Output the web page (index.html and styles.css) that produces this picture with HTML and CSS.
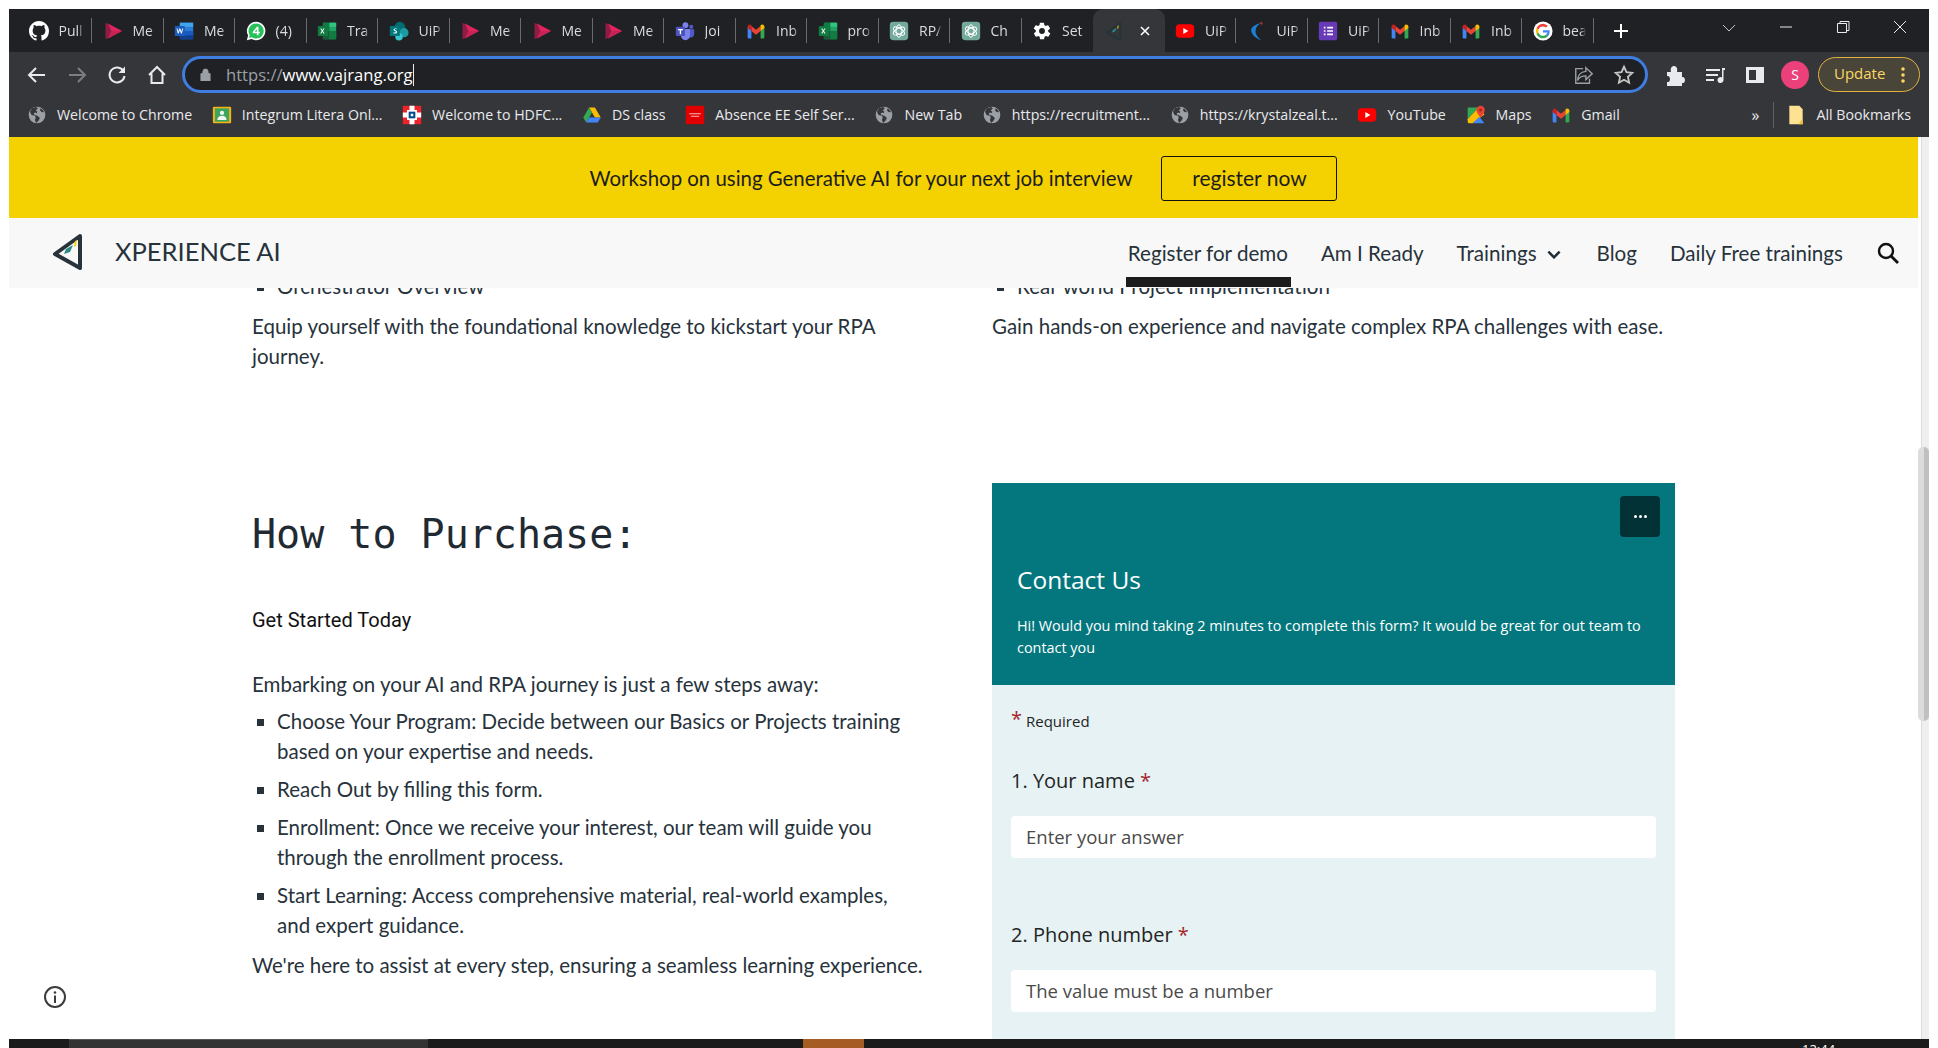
FILE: index.html
```html
<!DOCTYPE html>
<html lang="en">
<head>
    <meta charset="UTF-8">
    <title>XPERIENCE AI</title>
    <link rel="stylesheet" href="styles.css">
</head>
<body>
    <svg class="defs" width="0" height="0">
        <symbol id="i-github" viewBox="0 0 16 16"><path fill="#fff" d="M8 0C3.58 0 0 3.58 0 8c0 3.54 2.29 6.53 5.47 7.59.4.07.55-.17.55-.38 0-.19-.01-.82-.01-1.49-2.01.37-2.53-.49-2.69-.94-.09-.23-.48-.94-.82-1.13-.28-.15-.68-.52-.01-.53.63-.01 1.08.58 1.23.82.72 1.21 1.87.87 2.33.66.07-.52.28-.87.51-1.07-1.78-.2-3.64-.89-3.64-3.95 0-.87.31-1.59.82-2.15-.08-.2-.36-1.02.08-2.12 0 0 .67-.21 2.2.82.64-.18 1.32-.27 2-.27.68 0 1.36.09 2 .27 1.53-1.04 2.2-.82 2.2-.82.44 1.1.16 1.92.08 2.12.51.56.82 1.27.82 2.15 0 3.07-1.87 3.75-3.65 3.95.29.25.54.73.54 1.48 0 1.07-.01 1.93-.01 2.2 0 .21.15.46.55.38A8.013 8.013 0 0016 8c0-4.42-3.58-8-8-8z"/></symbol>
        <symbol id="i-stream" viewBox="0 0 24 24"><path fill="#8e1c44" d="M3 2l9 5v10l-9 5z"/><path fill="#e0245e" d="M6 3l17 9L6 21l4-9z"/><path fill="#b51f50" d="M10 12h13L6 21z" opacity=".55"/></symbol>
        <symbol id="i-word" viewBox="0 0 24 24"><rect x="7" y="2" width="16" height="20" rx="1.5" fill="#2b7cd3"/><rect x="7" y="2" width="16" height="5" fill="#41a5ee"/><rect x="7" y="12" width="16" height="5" fill="#185abd"/><rect x="7" y="17" width="16" height="5" fill="#103f91"/><rect x="1" y="6" width="12" height="12" rx="1" fill="#1a5dbf"/><path d="M3 9l1.6 6h1l1.4-4 1.4 4h1L11 9H9.8l-.9 3.8L7.6 9h-1.200L5.100 12.800 4.200 9z" fill="#fff"/></symbol>
        <symbol id="i-whatsapp" viewBox="0 0 24 24"><path fill="#fff" d="M12 1a11 11 0 00-9.500 16.500L1 23l5.700-1.500A11 11 0 1012 1z"/><path fill="#25c15b" d="M12 3a9 9 0 00-7.600 13.700L3.600 20.300l3.500-.9A9 9 0 1012 3z"/><path fill="#fff" d="M13 7h2v6h1.500v1.800H15V17h-2v-2.200H8v-1.600zm0 6V10l-2.600 3z"/></symbol>
        <symbol id="i-excel" viewBox="0 0 24 24"><rect x="7" y="2" width="16" height="20" rx="1.500" fill="#21a366"/><rect x="7" y="2" width="8" height="10" fill="#107c41"/><rect x="15" y="12" width="8" height="10" fill="#107c41"/><rect x="7" y="12" width="8" height="10" fill="#185c37"/><rect x="15" y="2" width="8" height="5" fill="#33c481"/><rect x="1" y="6" width="12" height="12" rx="1" fill="#107c41"/><path d="M3.800 9h1.500l1.100 2 1.200-2h1.400l-1.900 3 2 3H7.600l-1.200-2.100L5.200 15H3.800l2-3z" fill="#fff"/></symbol>
        <symbol id="i-share" viewBox="0 0 24 24"><circle cx="13" cy="7.500" r="6.500" fill="#036c70"/><circle cx="18" cy="14" r="5.500" fill="#1a9ba1"/><circle cx="12" cy="19" r="4.500" fill="#37c6d0"/><rect x="1" y="6" width="12" height="12" rx="1" fill="#03787c"/><path d="M9.500 9.300C8.700 8.800 6 8.500 5.500 10.200c-.4 1.800 3 1.700 2.800 3-.2 1-2 .8-3 .2v1.300c1.200.5 4.300.6 4.400-1.600.1-2-3-1.900-2.800-3 .2-.8 1.600-.6 2.600-.1z" fill="#fff"/></symbol>
        <symbol id="i-teams" viewBox="0 0 24 24"><circle cx="12.500" cy="5" r="3.500" fill="#7b83eb"/><circle cx="19.500" cy="7" r="2.500" fill="#5059c9"/><path d="M16 10h7v6a4 4 0 01-7 2.500z" fill="#5059c9"/><path d="M7 9.500h11v8a5 5 0 01-11 0z" fill="#7b83eb"/><rect x="1" y="7" width="11" height="11" rx="1" fill="#4b53bc"/><path d="M3.500 9.500h6v1.500H7.300v5H5.700v-5H3.500z" fill="#fff"/></symbol>
        <symbol id="i-gmail" viewBox="0 0 24 24"><path fill="#4285f4" d="M2 7h4.500v14H3.500A1.500 1.500 0 012 19.500z"/><path fill="#34a853" d="M17.500 7H22v12.500a1.500 1.500 0 01-1.500 1.500h-3z"/><path fill="#ea4335" d="M6.500 6L12 10.500 17.500 6v6L12 16.500 6.500 12z"/><path fill="#c5221f" d="M2 7c0-2.500 2.700-3.500 4.500-2V12L2 8.500z"/><path fill="#fbbc04" d="M22 7c0-2.500-2.700-3.500-4.500-2V12L22 8.500z"/></symbol>
        <symbol id="i-gpt" viewBox="0 0 24 24"><rect x="1" y="1" width="22" height="22" rx="4" fill="#74aa9c"/><g fill="none" stroke="#fff" stroke-width="1.200"><ellipse cx="12" cy="12" rx="3.500" ry="7.500"/><ellipse cx="12" cy="12" rx="3.500" ry="7.500" transform="rotate(60 12 12)"/><ellipse cx="12" cy="12" rx="3.500" ry="7.500" transform="rotate(120 12 12)"/></g></symbol>
        <symbol id="i-gear" viewBox="0 0 24 24"><path fill="#fff" d="M19.400 13a7.500 7.500 0 000-2l2.100-1.600a.5.5 0 00.1-.6l-2-3.500a.5.5 0 00-.6-.2l-2.500 1a7.300 7.300 0 00-1.700-1l-.4-2.600a.5.5 0 00-.5-.5h-4a.5.5 0 00-.5.400l-.4 2.700a7.300 7.300 0 00-1.700 1l-2.500-1a.5.5 0 00-.6.2l-2 3.500a.5.5 0 00.1.6L4.600 11a7.500 7.500 0 000 2l-2.100 1.600a.5.5 0 00-.1.6l2 3.500c.1.200.4.300.6.200l2.500-1c.5.400 1.100.7 1.700 1l.4 2.600c0 .3.200.5.500.5h4c.3 0 .5-.2.500-.4l.4-2.700c.6-.3 1.200-.6 1.700-1l2.500 1c.2.100.5 0 .6-.2l2-3.500a.5.5 0 00-.1-.6zM12 15.500a3.500 3.500 0 110-7 3.500 3.500 0 010 7z"/></symbol>
        <symbol id="i-logo" viewBox="0 0 34 38"><path d="M29 4L4 22l25 14V4z" fill="none" stroke="#27323b" stroke-width="4" stroke-linejoin="round"/><path d="M15 17l7-4-3 7-6 2z" fill="#2a8a83"/><path d="M24 9l2-1-1 6-2 1z" fill="#f4d100"/></symbol>
        <symbol id="i-youtube" viewBox="0 0 24 24"><rect x="1" y="4" width="22" height="16" rx="4.500" fill="#f00"/><path d="M10 8.500l6 3.500-6 3.500z" fill="#fff"/></symbol>
        <symbol id="i-uip" viewBox="0 0 24 24"><path d="M17 2C9 7 7 15 17 23 13 22 5 17 5 11c0-4 5-7 12-9z" fill="#1b7fd4"/><path d="M16 1l3 1-2 3z" fill="#e02b2b"/></symbol>
        <symbol id="i-forms" viewBox="0 0 24 24"><rect x="1" y="1" width="22" height="22" rx="2" fill="#673ab7"/><path d="M7 7h2v2H7zm4 0h7v2h-7zm-4 4h2v2H7zm4 0h7v2h-7zm-4 4h2v2H7zm4 0h7v2h-7z" fill="#fff"/></symbol>
        <symbol id="i-google" viewBox="0 0 24 24"><circle cx="12" cy="12" r="11.500" fill="#fff"/><path d="M12 11v2.800h5.200a5.400 5.400 0 01-1.500 2.500l2.300 1.900A8 8 0 0020 12l-.1-1z" fill="#4285f4"/><path d="M6.600 13.800l-2.400 1.900A8.500 8.500 0 0018 18.200l-2.300-1.900a5.500 5.500 0 01-9.100-2.500z" fill="#34a853"/><path d="M6.600 10.300L4.200 8.400a8.500 8.500 0 000 7.300l2.400-1.900a5.500 5.500 0 010-3.500z" fill="#fbbc04"/><path d="M12 6.500c1.400 0 2.700.5 3.700 1.400l2.100-2.100A8.500 8.500 0 004.200 8.400l2.400 1.900A5.500 5.500 0 0112 6.500z" fill="#ea4335"/></symbol>
        <symbol id="i-globe" viewBox="0 0 24 24"><circle cx="12" cy="12" r="10" fill="#9aa0a6"/><path d="M11 2.500l-5 1.500-2.500 4 2 4 4 1 1 2-1 3 1.500 3.500 3-3 1.500-3-3-2.500-3.500-1-1-2 2-1 1.500 1 1-2-2-1.500 2.500-2.500z" fill="#35363a"/><path d="M16.500 3.800l-1 2.500 2 2 3 .5a10 10 0 00-4-5z" fill="#35363a"/></symbol>
        <symbol id="i-integrum" viewBox="0 0 24 24"><rect x="1" y="2" width="22" height="20" rx="1.500" fill="#f2b31b"/><rect x="3.500" y="4" width="17" height="16" fill="#3ba55d"/><circle cx="12" cy="9.500" r="2.500" fill="#f4f4f4"/><path d="M6.500 18c0-3.500 2.500-5 5.500-5s5.500 1.500 5.500 5z" fill="#f4f4f4"/></symbol>
        <symbol id="i-hdfc" viewBox="0 0 24 24"><rect x="1" y="1" width="22" height="22" fill="#ed232a"/><path d="M1 9h5V6h3V1h6v5h3v3h5v6h-5v3h-3v5H9v-5H6v-3H1z" fill="#fff"/><rect x="8" y="8" width="8" height="8" fill="#004c8f"/><rect x="10.500" y="10.500" width="3" height="3" fill="#fff"/></symbol>
        <symbol id="i-drive" viewBox="0 0 24 24"><path d="M8.500 3h7l7 12h-7z" fill="#fbbc04"/><path d="M8.500 3l-7 12 3.500 6 7-12z" fill="#34a853"/><path d="M5 21h14l3.500-6h-14z" fill="#4285f4"/></symbol>
        <symbol id="i-oracle" viewBox="0 0 24 24"><rect x="1" y="1" width="22" height="22" fill="#e00000"/><path d="M5 10h14v1H5zm2 3h10v1H7z" fill="#f7b5b5"/></symbol>
        <symbol id="i-maps" viewBox="0 0 24 24"><path d="M2 3h13L2 17z" fill="#34a853"/><path d="M2 17L15 3l7 8v.500L8 22H4a2 2 0 01-2-2z" fill="#fbbc04"/><path d="M8 22l8-8 6 8z" fill="#4285f4"/><path d="M17.500 1a5 5 0 00-5 5c0 3.500 5 9 5 9s5-5.500 5-9a5 5 0 00-5-5z" fill="#ea4335"/><circle cx="17.500" cy="6" r="1.800" fill="#a52714"/></symbol>
        <symbol id="i-folder" viewBox="0 0 24 24"><path d="M4 1h12l4 4v18H4z" fill="#fde293"/><path d="M20 16v7h-5z" fill="#f2bd42"/></symbol>
    </svg>

    <div class="window">
        <div class="tabstrip">
            <div class="tab"><svg class="favicon"><use href="#i-github"/></svg><span class="tab-title">Pull</span></div>
            <div class="tab"><svg class="favicon"><use href="#i-stream"/></svg><span class="tab-title">Me</span></div>
            <div class="tab"><svg class="favicon"><use href="#i-word"/></svg><span class="tab-title">Me</span></div>
            <div class="tab"><svg class="favicon"><use href="#i-whatsapp"/></svg><span class="tab-title">(4)</span></div>
            <div class="tab"><svg class="favicon"><use href="#i-excel"/></svg><span class="tab-title">Tra</span></div>
            <div class="tab"><svg class="favicon"><use href="#i-share"/></svg><span class="tab-title">UiP</span></div>
            <div class="tab"><svg class="favicon"><use href="#i-stream"/></svg><span class="tab-title">Me</span></div>
            <div class="tab"><svg class="favicon"><use href="#i-stream"/></svg><span class="tab-title">Me</span></div>
            <div class="tab"><svg class="favicon"><use href="#i-stream"/></svg><span class="tab-title">Me</span></div>
            <div class="tab"><svg class="favicon"><use href="#i-teams"/></svg><span class="tab-title">Joi</span></div>
            <div class="tab"><svg class="favicon"><use href="#i-gmail"/></svg><span class="tab-title">Inb</span></div>
            <div class="tab"><svg class="favicon"><use href="#i-excel"/></svg><span class="tab-title">pro</span></div>
            <div class="tab"><svg class="favicon"><use href="#i-gpt"/></svg><span class="tab-title">RP/</span></div>
            <div class="tab"><svg class="favicon"><use href="#i-gpt"/></svg><span class="tab-title">Ch</span></div>
            <div class="tab no-sep"><svg class="favicon"><use href="#i-gear"/></svg><span class="tab-title">Set</span></div>
            <div class="tab tab-active">
                <svg class="favicon"><use href="#i-logo"/></svg>
                <svg class="tab-close" viewBox="0 0 12 12"><path d="M2 2l8 8M10 2l-8 8" stroke="#fff" stroke-width="1.600"/></svg>
            </div>
            <div class="tab"><svg class="favicon"><use href="#i-youtube"/></svg><span class="tab-title">UiP</span></div>
            <div class="tab"><svg class="favicon"><use href="#i-uip"/></svg><span class="tab-title">UiP</span></div>
            <div class="tab"><svg class="favicon"><use href="#i-forms"/></svg><span class="tab-title">UiP</span></div>
            <div class="tab"><svg class="favicon"><use href="#i-gmail"/></svg><span class="tab-title">Inb</span></div>
            <div class="tab"><svg class="favicon"><use href="#i-gmail"/></svg><span class="tab-title">Inb</span></div>
            <div class="tab"><svg class="favicon"><use href="#i-google"/></svg><span class="tab-title">bea</span></div>
            <svg class="new-tab" viewBox="0 0 16 16"><path d="M8 1v14M1 8h14" stroke="#fff" stroke-width="2"/></svg>
            <div class="window-controls">
                <svg class="win-btn" viewBox="0 0 16 16"><path d="M2 6l6 6 6-6" fill="none" stroke="#c4c7c5"/></svg>
                <svg class="win-btn" viewBox="0 0 16 16"><path d="M2 8h12" stroke="#e8eaed"/></svg>
                <svg class="win-btn" viewBox="0 0 16 16"><path d="M2.500 4.500h9v9h-9zM5 4.500V2.500h9v9h-2.500" fill="none" stroke="#e8eaed"/></svg>
                <svg class="win-btn" viewBox="0 0 16 16"><path d="M2 2l12 12M14 2L2 14" stroke="#e8eaed"/></svg>
            </div>
        </div>

        <div class="toolbar">
            <svg class="tool-icon" viewBox="0 0 24 24"><path d="M20 12H5M11 5l-7 7 7 7" fill="none" stroke="#e8eaed" stroke-width="2"/></svg>
            <svg class="tool-icon" viewBox="0 0 24 24"><path d="M4 12h15M13 5l7 7-7 7" fill="none" stroke="#7c7e82" stroke-width="2"/></svg>
            <svg class="tool-icon" viewBox="0 0 24 24"><path d="M18.500 8A7.500 7.500 0 1019.500 13" fill="none" stroke="#e8eaed" stroke-width="2"/><path d="M20 3.500V10h-6.500z" fill="#e8eaed"/></svg>
            <svg class="tool-icon" viewBox="0 0 24 24"><path d="M4 12l8-8 8 8M6.500 10.500V20h11v-9.500" fill="none" stroke="#e8eaed" stroke-width="2"/></svg>
            <div class="omnibox">
                <svg class="lock" viewBox="0 0 12 14"><path d="M1 6h10v8H1zM3.200 6V3.800a2.800 2.800 0 015.600 0V6" fill="#9aa0a6" stroke="#9aa0a6" stroke-width="1" fill-rule="evenodd"/></svg>
                <span class="url"><span class="url-scheme">https://</span>www.vajrang.org</span><span class="caret"></span>
                <svg class="omni-icon omni-share" viewBox="0 0 24 24"><path d="M14 4l7 6.500-7 6.500v-4c-4 0-7 1-9 5 0-5 3-9.500 9-10zM11 5H3v16h15v-5" fill="none" stroke="#9aa0a6" stroke-width="1.500"/></svg>
                <svg class="omni-icon" viewBox="0 0 24 24"><path d="M12 3l2.700 6 6.300.7-4.700 4.300 1.300 6.500L12 17.200l-5.600 3.300 1.300-6.500L3 9.700 9.300 9z" fill="none" stroke="#c4c7c5" stroke-width="2"/></svg>
            </div>
            <svg class="tool-icon" viewBox="0 0 24 24"><path d="M4 9h4c-1-4 1-6 3-6s4 2 3 6h5v5c4-1 4 7 0 6v3H4v-4c4 1 4-7 0-6z" fill="#e8eaed"/></svg>
            <svg class="tool-icon" viewBox="0 0 24 24"><path d="M3 6h14v2H3zm0 5h12v2H3zm0 5h8v2H3zM19 5h3v2h-1.500v10a3 3 0 11-1.500-2.500z" fill="#e8eaed"/></svg>
            <svg class="tool-icon" viewBox="0 0 24 24"><path d="M3 4h18v16H3zM6 7v10h7V7z" fill="#e8eaed" fill-rule="evenodd"/></svg>
            <span class="avatar">S</span>
            <div class="update-btn">
                <span class="update-label">Update</span>
                <svg class="update-dots" viewBox="0 0 4 18"><circle cx="2" cy="3" r="1.800"/><circle cx="2" cy="9" r="1.800"/><circle cx="2" cy="15" r="1.800"/></svg>
            </div>
        </div>

        <div class="bookmarks">
            <a class="bm bm-chrome"><svg class="bm-icon"><use href="#i-globe"/></svg>Welcome to Chrome</a>
            <a class="bm"><svg class="bm-icon"><use href="#i-integrum"/></svg>Integrum Litera Onl...</a>
            <a class="bm"><svg class="bm-icon"><use href="#i-hdfc"/></svg>Welcome to HDFC...</a>
            <a class="bm"><svg class="bm-icon"><use href="#i-drive"/></svg>DS class</a>
            <a class="bm"><svg class="bm-icon"><use href="#i-oracle"/></svg>Absence EE Self Ser...</a>
            <a class="bm"><svg class="bm-icon"><use href="#i-globe"/></svg>New Tab</a>
            <a class="bm"><svg class="bm-icon"><use href="#i-globe"/></svg>https://recruitment...</a>
            <a class="bm"><svg class="bm-icon"><use href="#i-globe"/></svg>https://krystalzeal.t...</a>
            <a class="bm"><svg class="bm-icon"><use href="#i-youtube"/></svg>YouTube</a>
            <a class="bm"><svg class="bm-icon"><use href="#i-maps"/></svg>Maps</a>
            <a class="bm"><svg class="bm-icon"><use href="#i-gmail"/></svg>Gmail</a>
            <span class="bm-more">»</span>
            <a class="bm bm-all"><svg class="bm-icon"><use href="#i-folder"/></svg>All Bookmarks</a>
        </div>

        <div class="page">
            <div class="promo">
                <span>Workshop on using Generative AI for your next job interview</span>
                <a class="promo-btn">register now</a>
            </div>

            <nav class="site-nav">
                <svg class="site-logo"><use href="#i-logo"/></svg>
                <span class="site-name">XPERIENCE AI</span>
                <ul class="nav-links">
                    <li class="nav-current">Register for demo</li>
                    <li>Am I Ready</li>
                    <li class="nav-drop">Trainings
                        <svg class="nav-chevron" viewBox="0 0 12 8"><path d="M1 1.500l5 5 5-5" fill="none" stroke="#1f2a33" stroke-width="2.200"/></svg>
                    </li>
                    <li>Blog</li>
                    <li>Daily Free trainings</li>
                </ul>
                <svg class="nav-search" viewBox="0 0 24 24"><circle cx="10" cy="10" r="7" fill="none" stroke="#111" stroke-width="2.400"/><path d="M15 15l7 7" stroke="#111" stroke-width="2.800"/></svg>
            </nav>

            <div class="content">
                <div class="col">
                    <ul class="squares">
                        <li>Orchestrator Overview</li>
                    </ul>
                    <p class="after-list">Equip yourself with the foundational knowledge to kickstart your RPA journey.</p>
                </div>
                <div class="col col-right">
                    <ul class="squares">
                        <li>Real-world Project Implementation</li>
                    </ul>
                    <p class="after-list">Gain hands-on experience and navigate complex RPA challenges with ease.</p>
                </div>

                <div class="col purchase">
                    <h2>How to Purchase:</h2>
                    <h5>Get Started Today</h5>
                    <p>Embarking on your AI and RPA journey is just a few steps away:</p>
                    <ul class="squares steps">
                        <li>Choose Your Program: Decide between our Basics or Projects training based on your expertise and needs.</li>
                        <li>Reach Out by filling this form.</li>
                        <li>Enrollment: Once we receive your interest, our team will guide you through the enrollment process.</li>
                        <li>Start Learning: Access comprehensive material, real-world examples, and expert guidance.</li>
                    </ul>
                    <p class="closing">We're here to assist at every step, ensuring a seamless learning experience.</p>
                </div>

                <div class="form-card">
                    <div class="form-head">
                        <span class="form-menu"><i></i><i></i><i></i></span>
                        <h3>Contact Us</h3>
                        <p>Hi! Would you mind taking 2 minutes to complete this form? It would be great for out team to contact you</p>
                    </div>
                    <div class="form-body">
                        <div class="form-required"><span class="star star-lead">*</span>Required</div>
                        <div class="question">1. Your name <span class="star">*</span></div>
                        <div class="answer">Enter your answer</div>
                        <div class="question question-next">2. Phone number <span class="star">*</span></div>
                        <div class="answer">The value must be a number</div>
                    </div>
                </div>
            </div>

            <svg class="info-btn" viewBox="0 0 24 24"><circle cx="12" cy="12" r="10" fill="none" stroke="#3c3c3c" stroke-width="2"/><path d="M12 10.500V18" stroke="#3c3c3c" stroke-width="2"/><circle cx="12" cy="7.500" r="1.300" fill="#3c3c3c"/></svg>
        </div>

        <div class="scrollbar"><div class="scroll-thumb"></div></div>
    </div>

    <div class="taskbar">
        <span class="task task-open"></span>
        <span class="task task-alert"></span>
        <span class="clock">12:44</span>
    </div>
</body>
</html>
```

FILE: styles.css
```css
html, body {
    margin: 0;
    padding: 0;
    width: 1938px;
    height: 1048px;
    overflow: hidden;
    background: #fff;
}
.defs {
    position: absolute;
}

/* browser frame */
.window {
    position: relative;
    width: 1920px;
    height: 1030px;
    margin: 9px 0 0 9px;
    display: flex;
    flex-direction: column;
    font-family: "Open Sans", sans-serif;
}
.tabstrip {
    height: 43px;
    flex: none;
    background: #202124;
    display: flex;
    align-items: center;
    padding-left: 11.5px;
    color: #dadce0;
    font-size: 14px;
}
.tab {
    flex: 0 0 71.5px;
    box-sizing: border-box;
    height: 25px;
    display: flex;
    align-items: center;
    padding-left: 10.5px;
    gap: 10px;
    border-right: 1px solid #6a6b6e;
    overflow: hidden;
}
.tab:first-child {
    padding-left: 8px;
}
.no-sep {
    border-right: none;
}
.tab-title {
    white-space: nowrap;
    overflow: hidden;
    flex: 1;
    margin-right: 7px;
    -webkit-mask-image: linear-gradient(to right, #000 75%, transparent);
    mask-image: linear-gradient(to right, #000 75%, transparent);
}
.favicon {
    width: 20px;
    height: 20px;
    flex: none;
}
.tab-active {
    height: 43px;
    align-self: flex-end;
    background: #35363a;
    border: none;
    border-radius: 10px 10px 0 0;
    justify-content: space-between;
    padding: 0 14px 0 11px;
}
.tab-close {
    width: 12px;
    height: 12px;
}
.new-tab {
    width: 16px;
    height: 16px;
    margin-left: 19px;
}
.window-controls {
    margin-left: auto;
    display: flex;
    align-items: center;
    gap: 41px;
    padding-right: 21px;
    margin-top: -8px;
}
.win-btn {
    width: 16px;
    height: 16px;
}

.toolbar {
    height: 45px;
    flex: none;
    background: #35363a;
    display: flex;
    align-items: center;
    padding: 0 11px 0 16px;
    box-sizing: border-box;
}
.tool-icon {
    width: 24px;
    height: 24px;
    margin-right: 16px;
    flex: none;
}
.omnibox {
    flex: 0 0 1466px;
    box-sizing: border-box;
    height: 37px;
    margin: 0 15px 0 -3px;
    display: flex;
    align-items: center;
    background: #202124;
    border: 3px solid #3f7de0;
    border-radius: 19px;
    padding: 0 10px 0 15px;
    color: #fff;
    font-size: 16.600px;
}
.lock {
    width: 11px;
    height: 13px;
    margin-right: 15px;
}
.url-scheme {
    color: #9aa0a6;
}
.caret {
    width: 1px;
    height: 22px;
    background: #e8eaed;
}
.omni-icon {
    width: 22px;
    height: 22px;
    margin-left: 18px;
}
.omni-share {
    margin-left: auto;
}
.avatar {
    width: 28px;
    height: 28px;
    flex: none;
    margin: 0 9px 0 -2px;
    border-radius: 50%;
    background: #ec407a;
    color: #fff;
    font-size: 14px;
    text-align: center;
    line-height: 28px;
}
.update-btn {
    flex: none;
    box-sizing: border-box;
    width: 102px;
    height: 35px;
    display: flex;
    align-items: center;
    justify-content: space-between;
    padding: 0 14px 0 15px;
    border: 1.5px solid #e3b341;
    border-radius: 18px;
    background: #4a4539;
    color: #fdd663;
    font-size: 15px;
}
.update-label {
    margin-top: -3px;
}
.update-dots {
    width: 4px;
    height: 18px;
    fill: #fdd663;
}

.bookmarks {
    height: 40px;
    flex: none;
    box-sizing: border-box;
    padding: 0 0 5px 18px;
    background: #35363a;
    display: flex;
    align-items: center;
    color: #e8eaed;
    font-size: 14.200px;
    white-space: nowrap;
}
.bm {
    display: flex;
    align-items: center;
    gap: 10px;
    margin-right: 19.700px;
}
.bm-icon {
    width: 20px;
    height: 20px;
    flex: none;
}
.bm-more {
    margin-left: auto;
    padding-right: 14px;
    margin-right: 12px;
    border-right: 1px solid #5f6064;
    line-height: 26px;
    font-size: 16px;
}
.bm-all {
    margin-right: 18px;
}

/* page */
.page {
    position: relative;
    flex: 1;
    width: 1909px;
    background: #fff;
    overflow: hidden;
    font-family: "Lato", sans-serif;
    font-size: 20.500px;
    line-height: 30px;
    color: #27323b;
}
.promo {
    height: 81px;
    background: #f4d100;
    display: flex;
    align-items: center;
    justify-content: center;
    gap: 29px;
    font-size: 20.400px;
    color: #1c1c1c;
    position: relative;
    z-index: 2;
}
.promo-btn {
    box-sizing: border-box;
    width: 176px;
    height: 45px;
    margin-top: 2px;
    line-height: 41px;
    text-align: center;
    border: 1.500px solid #111;
    border-radius: 3px;
    font-size: 21px;
}
.site-nav {
    position: relative;
    z-index: 2;
    height: 70px;
    background: #f8f8f8;
    display: flex;
    align-items: center;
    padding: 0 18px 0 42px;
    font-size: 20.600px;
}
.site-logo {
    width: 34px;
    height: 38px;
    margin-top: -4px;
}
.site-name {
    font-size: 25.500px;
    margin-left: 30px;
    margin-top: -4px;
    color: #27323b;
}
.nav-links {
    list-style: none;
    margin: 0 33px 0 auto;
    padding: 0;
    display: flex;
    gap: 33px;
}
.nav-current {
    position: relative;
}
.nav-current::after {
    content: "";
    position: absolute;
    left: -2px;
    right: -3px;
    top: 39px;
    height: 10px;
    background: #1c1c1c;
}
.nav-drop {
    display: flex;
    align-items: center;
    gap: 10px;
    margin-right: 3px;
}
.nav-chevron {
    width: 14px;
    height: 9px;
    margin-top: 3px;
}
.nav-search {
    width: 24px;
    height: 24px;
}
.content {
    display: grid;
    grid-template-columns: 740px 683px;
    padding-left: 243px;
    margin-top: -17px;
    align-items: start;
}
.col p,
.col ul {
    margin: 0;
}
.col {
    width: 680px;
}
.col-right {
    width: 683px;
}
.squares {
    list-style: square;
    padding-left: 25px;
}
.after-list {
    padding-top: 10px;
}
.purchase h2 {
    margin: 0;
    padding-top: 138px;
    font-family: "DejaVu Sans Mono", monospace;
    font-weight: 400;
    font-size: 40px;
    line-height: 50px;
    color: #1f2a33;
}
.purchase h5 {
    margin: 0;
    padding: 46px 0 34px;
    font-family: "Roboto", sans-serif;
    font-weight: 400;
    font-size: 20px;
    line-height: 30px;
    color: #111;
}
.steps {
    padding-top: 7px;
    padding-right: 12px;
}
.steps li {
    margin-bottom: 8px;
}
.closing {
    padding-top: 2px;
}

/* embedded form */
.form-card {
    font-family: "Open Sans", sans-serif;
    margin-top: 112px;
    height: 700px;
}
.form-head {
    position: relative;
    height: 202px;
    box-sizing: border-box;
    padding: 79px 25px 0;
    background: #04777e;
    color: #fff;
}
.form-menu {
    position: absolute;
    top: 13px;
    right: 15px;
    width: 40px;
    height: 41px;
    border-radius: 4px;
    background: #023236;
    display: flex;
    align-items: center;
    justify-content: center;
    gap: 2px;
}
.form-menu i {
    width: 3px;
    height: 3px;
    border-radius: 50%;
    background: #fff;
}
.form-head h3 {
    margin: 0 0 17px;
    font-size: 24.500px;
    font-weight: 400;
    line-height: 36px;
}
.form-head p {
    margin: 0;
    font-size: 14.400px;
    line-height: 22px;
}
.form-body {
    background: #e6f2f3;
    padding: 24px 19px 0;
    height: 498px;
    box-sizing: border-box;
    color: #242424;
}
.form-required {
    font-size: 15px;
    line-height: 24px;
}
.star {
    color: #a4262c;
}
.star-lead {
    font-size: 20px;
    line-height: 15px;
    margin-right: 4px;
    vertical-align: 1px;
}
.question {
    margin-top: 34px;
    font-size: 20px;
    line-height: 28px;
    padding-bottom: 21px;
}
.question-next {
    margin-top: 63px;
}
.answer {
    box-sizing: border-box;
    height: 42px;
    background: #fff;
    border-radius: 4px;
    padding: 0 15px;
    font-size: 18.500px;
    line-height: 42px;
    color: #4a4a4a;
}
.info-btn {
    position: absolute;
    left: 34px;
    bottom: 30px;
    width: 24px;
    height: 24px;
}

/* scrollbar lies over the right edge of the window */
.scrollbar {
    position: absolute;
    top: 128px;
    bottom: 0;
    left: 1912px;
    width: 8px;
    background: #efefef;
    border-left: 1px solid #dcdcdc;
    box-sizing: border-box;
}
.scroll-thumb {
    position: absolute;
    top: 310px;
    left: -4px;
    width: 11px;
    height: 274px;
    border-radius: 5px;
    background: linear-gradient(to right, #dcdcdc 55%, #c0c0c0 55%);
}

.taskbar {
    height: 9px;
    width: 1920px;
    margin-left: 9px;
    background: #1b1b1b;
    display: flex;
    overflow: hidden;
    position: relative;
}
.task {
    display: block;
    height: 9px;
}
.task-open {
    width: 359px;
    margin-left: 60px;
    background: #333;
    border-top: 1px solid #555;
    box-sizing: border-box;
}
.task-alert {
    width: 61px;
    margin-left: 375px;
    background: #a55d25;
}
.clock {
    margin-left: 938px;
    color: #fff;
    font-family: "Open Sans", sans-serif;
    font-size: 13px;
    line-height: 18px;
    padding-top: 1px;
}
```
